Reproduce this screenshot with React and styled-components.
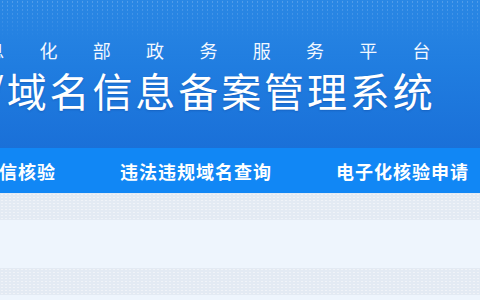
import React from "react";
import styled, { createGlobalStyle } from "styled-components";

const GlobalStyle = createGlobalStyle`
  html, body {
    margin: 0;
    padding: 0;
    overflow: hidden;
    background: #eef5fd;
    font-family: "Noto Sans CJK SC", "Noto Sans", sans-serif;
  }
`;

const navItems = ["诚信核验", "违法违规域名查询", "电子化核验申请"];

const App = () => {
  return (
    <Page>
      <GlobalStyle />
      <Header>
        <Dots />
        <HeaderInner>
          <SubTitle>工业和信息化部政务服务平台</SubTitle>
          <Title>ICP/IP地址/域名信息备案管理系统</Title>
        </HeaderInner>
      </Header>
      <Nav>
        <NavList>
          {navItems.map((item) => (
            <NavItem key={item}>{item}</NavItem>
          ))}
        </NavList>
      </Nav>
      <Band />
      <Body />
      <Band />
    </Page>
  );
};

export default App;

const Page = styled.div`
  width: 480px;
  height: 300px;
  overflow: hidden;
  display: flex;
  flex-direction: column;
`;

const Header = styled.header`
  position: relative;
  height: 148px;
  background: linear-gradient(180deg, #2a87e4 0%, #207de0 45%, #1a70d8 100%);
  overflow: hidden;
`;

const Dots = styled.div`
  position: absolute;
  left: 0;
  right: 0;
  top: 0;
  height: 40px;
  background-image: radial-gradient(rgba(255, 255, 255, 0.35) 0.6px, transparent 0.9px);
  background-size: 5px 4px;
  opacity: 0.6;
  -webkit-mask-image: linear-gradient(180deg, #000, transparent);
  mask-image: linear-gradient(180deg, #000, transparent);
`;

const HeaderInner = styled.div`
  position: relative;
  margin-left: -227px;
  padding-top: 38px;
  display: flex;
  flex-direction: column;
  white-space: nowrap;
  color: #fff;
`;

const SubTitle = styled.div`
  font-size: 18px;
  line-height: 24px;
  letter-spacing: 35.3px;
  color: #f2f8ff;
`;

const Title = styled.h1`
  margin: 4px 0 0;
  font-size: 40px;
  line-height: 48px;
  font-weight: 400;
  letter-spacing: 2.9px;
  text-shadow: 0 1px 2px rgba(0, 40, 120, 0.25);
`;

const Nav = styled.nav`
  height: 45px;
  background: #1187f5;
  display: flex;
  align-items: center;
  overflow: hidden;
`;

const NavList = styled.div`
  display: flex;
  gap: 64px;
  margin-left: -20px;
  white-space: nowrap;
`;

const NavItem = styled.div`
  color: #fff;
  font-size: 18px;
  font-weight: 700;
  letter-spacing: 1px;
  line-height: 24px;
`;

const Band = styled.div`
  height: 27px;
  background-color: #e3eaf3;
  background-image: radial-gradient(rgba(255, 255, 255, 0.45) 0.6px, transparent 0.9px);
  background-size: 4px 3px;
`;

const Body = styled.div`
  height: 48px;
  background: #eef5fd;
`;
